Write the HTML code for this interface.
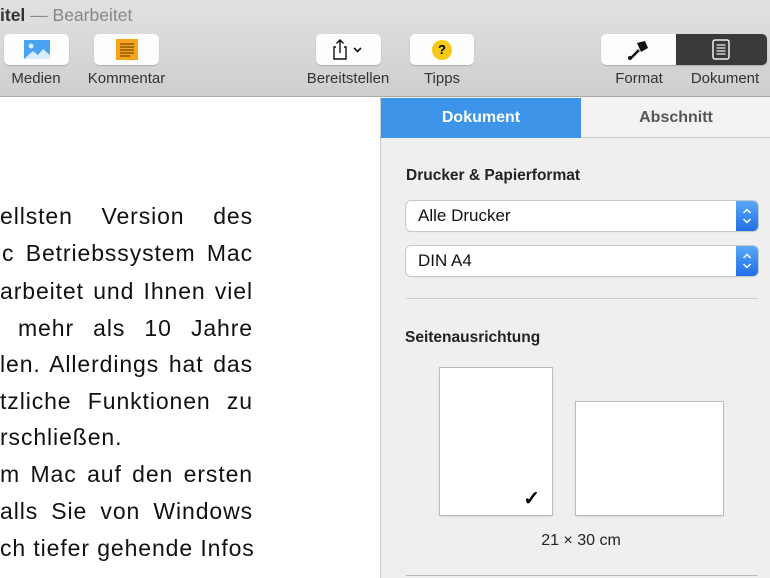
<!DOCTYPE html>
<html><head><meta charset="utf-8"><style>
*{margin:0;padding:0;box-sizing:border-box}
body{width:770px;height:578px;overflow:hidden;position:relative;font-family:"Liberation Sans",sans-serif;background:#fff}
.tb{position:absolute;left:0;top:0;width:770px;height:97px;background:linear-gradient(#e2e0e2,#cfcdcf);border-bottom:1px solid #aaa}
.btn{position:absolute;top:34px;height:31px;background:#fdfdfd;border-radius:5px;box-shadow:0 1px 1px rgba(0,0,0,.2)}
.lbl{position:absolute;top:70px;font-size:15px;color:#333;text-align:center}
.line{position:absolute;left:0;width:253px;font-size:23px;letter-spacing:0.9px;color:#111;white-space:nowrap;text-align:justify;text-align-last:justify}
.side{position:absolute;left:380px;top:97px;width:390px;height:481px;background:#efefef;border-left:1px solid #ccc}
.pop{position:absolute;left:25px;width:352px;height:30px;background:#fff;border-radius:5px;box-shadow:0 0 0 1px #c8c8c8,0 1px 1px rgba(0,0,0,.15);font-size:17px;color:#111;padding:5px 0 0 12px}
.st{position:absolute;right:0;top:0;width:22px;height:30px;background:linear-gradient(#5aa8f8,#1f6fe6);border-radius:0 5px 5px 0}
</style></head><body>
<div class="tb">
<div style="position:absolute;left:0;top:5px;font-size:17.5px;color:#333"><b>itel</b> <span style="color:#888">— Bearbeitet</span></div>
<div class="btn" style="left:4px;width:65px"><svg style="position:absolute;left:20px;top:6px" width="26" height="19"><rect width="26" height="19" fill="#4aa3f0"/><circle cx="7" cy="6" r="2.5" fill="#d8ecfb"/><path d="M0 19 L9 11 L14 15 L19 9 L26 15 V19Z" fill="#d8ecfb"/></svg></div>
<div class="btn" style="left:94px;width:65px"><svg style="position:absolute;left:22px;top:5px" width="22" height="21"><rect width="22" height="21" fill="#f7a41c"/><path d="M4 5h14M4 8h14M4 11h14M4 14h14M4 17h10" stroke="#7a4a00" stroke-width="1.2"/></svg></div>
<div class="lbl" style="left:0;width:72px">Medien</div>
<div class="lbl" style="left:80px;width:93px">Kommentar</div>
<div class="btn" style="left:316px;width:65px"><svg style="position:absolute;left:17px;top:5px" width="34" height="21"><path d="M3 8 H1 V20 H13 V8 H11 M7 14 V1 M3.5 4.5 L7 1 L10.5 4.5" stroke="#111" stroke-width="1.4" fill="none"/><path d="M21 9 L24.5 12.5 L28 9" stroke="#111" stroke-width="1.6" fill="none"/></svg></div>
<div class="btn" style="left:410px;width:64px"><div style="position:absolute;left:22px;top:6px;width:20px;height:20px;border-radius:50%;background:#f6c915;font-size:13px;font-weight:bold;text-align:center;line-height:20px">?</div></div>
<div class="lbl" style="left:296px;width:104px">Bereitstellen</div>
<div class="lbl" style="left:410px;width:64px">Tipps</div>
<div class="btn" style="left:601px;width:75px;border-radius:5px 0 0 5px"><svg style="position:absolute;left:26px;top:6px" width="22" height="20"><path d="M10 3 L18 1 L21 8 L14 12Z" fill="#111"/><path d="M12 10 L4 18" stroke="#111" stroke-width="2.5"/><circle cx="3" cy="18" r="2" fill="#111"/></svg></div>
<div class="btn" style="left:676px;width:91px;background:#3a3a3a;border-radius:0 5px 5px 0"><svg style="position:absolute;left:36px;top:5px" width="18" height="21"><rect x="1" y="1" width="16" height="19" rx="2" fill="none" stroke="#eee" stroke-width="1.5"/><path d="M4.5 6h9M4.5 9h9M4.5 12h9M4.5 15h9" stroke="#eee" stroke-width="1.3"/></svg></div>
<div class="lbl" style="left:604px;width:70px">Format</div>
<div class="lbl" style="left:680px;width:90px">Dokument</div>
</div>
<div class="line" style="top:203px">ellsten Version des</div>
<div class="line" style="top:240px;left:2px;width:251px">c Betriebssystem Mac</div>
<div class="line" style="top:278px">arbeitet und Ihnen viel</div>
<div class="line" style="top:315px;left:18px;width:235px">mehr als 10 Jahre</div>
<div class="line" style="top:351px">len. Allerdings hat das</div>
<div class="line" style="top:388px">tzliche Funktionen zu</div>
<div class="line" style="top:424px;text-align-last:left">rschließen.</div>
<div class="line" style="top:461px">m Mac auf den ersten</div>
<div class="line" style="top:498px">alls Sie von Windows</div>
<div class="line" style="top:535px">ch tiefer gehende Infos</div>
<div class="side">
<div style="position:absolute;left:0;top:1px;width:200px;height:40px;background:#3d94e8;color:#fff;font-weight:bold;font-size:16px;text-align:center;line-height:40px">Dokument</div>
<div style="position:absolute;left:200px;top:1px;width:190px;height:40px;background:#f3f3f3;color:#555;font-weight:bold;font-size:16px;text-align:center;line-height:40px;border-bottom:1px solid #ccc">Abschnitt</div>
<div style="position:absolute;left:25px;top:70px;font-size:15.5px;font-weight:bold;color:#222">Drucker &amp; Papierformat</div>
<div class="pop" style="top:104px">Alle Drucker<div class="st"><svg width="22" height="30"><path d="M7.5 12 L11 8.5 L14.5 12 M7.5 18 L11 21.5 L14.5 18" stroke="#fff" stroke-width="1.5" fill="none"/></svg></div></div>
<div class="pop" style="top:149px">DIN A4<div class="st"><svg width="22" height="30"><path d="M7.5 12 L11 8.5 L14.5 12 M7.5 18 L11 21.5 L14.5 18" stroke="#fff" stroke-width="1.5" fill="none"/></svg></div></div>
<div style="position:absolute;left:25px;top:201px;width:352px;height:1px;background:#ccc"></div>
<div style="position:absolute;left:24px;top:232px;font-size:15.5px;font-weight:bold;color:#222">Seitenausrichtung</div>
<div style="position:absolute;left:59px;top:271px;width:112px;height:147px;background:#fff;box-shadow:0 0 0 1px #bbb,0 1px 2px rgba(0,0,0,.25)"><span style="position:absolute;right:12px;bottom:4px;font-size:20px;font-weight:bold">✓</span></div>
<div style="position:absolute;left:195px;top:305px;width:147px;height:113px;background:#fff;box-shadow:0 0 0 1px #bbb,0 1px 2px rgba(0,0,0,.25)"></div>
<div style="position:absolute;left:100px;width:200px;top:435px;font-size:16px;color:#222;text-align:center">21 × 30 cm</div>
<div style="position:absolute;left:25px;top:478px;width:352px;height:1px;background:#bbb"></div>
</div>
</body></html>
